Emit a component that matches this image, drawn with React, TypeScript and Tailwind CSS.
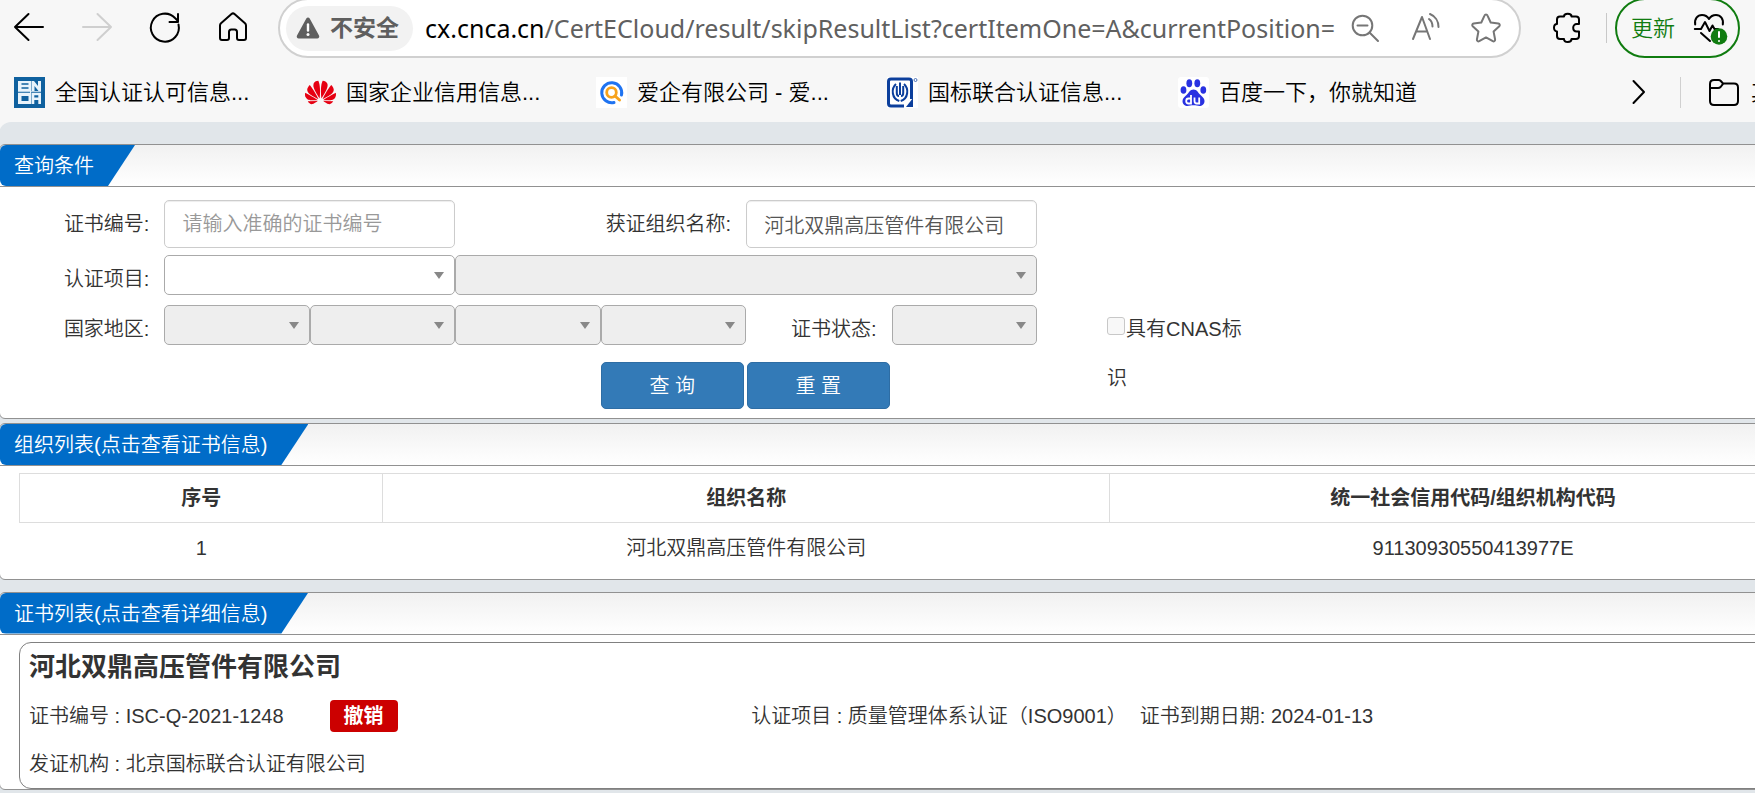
import { ReactNode } from "react";
import { SiHuawei } from "react-icons/si";

interface IPropsIcon {
  className?: string;
  children: ReactNode;
}

// 30 x 30 line icon used by the toolbar
const Icon = ({ className = "", children }: IPropsIcon) => (
  <svg
    viewBox="0 0 30 30"
    className={`block size-[30px] shrink-0 overflow-visible ${className}`}
    fill="none"
    stroke="currentColor"
    strokeWidth="2"
    strokeLinecap="round"
    strokeLinejoin="round"
    aria-hidden="true"
  >
    {children}
  </svg>
);

const Toolbar = () => (
  <div className="flex h-14 items-center pl-[14px] pr-[15px] text-black">
    <div className="flex shrink-0 gap-[38px] pr-[30px]">
      <button type="button" aria-label="后退">
        <Icon>
          <path d="M29 14H1M14.500 1L1 14l13.500 13" />
        </Icon>
      </button>
      <button type="button" aria-label="前进" disabled className="text-[#cfcfcf]">
        <Icon>
          <path d="M1 14h28M15.500 1L29 14 15.500 27" />
        </Icon>
      </button>
      <button type="button" aria-label="刷新">
        <Icon>
          <path d="M28.500 11.500A14 14 0 1 1 25 5l3 3M28 1v8h-8.500" />
        </Icon>
      </button>
      <button type="button" aria-label="主页">
        <Icon>
          <path d="M2 12.500c0-1 .3-1.700 1-2.300L13.500 1c.9-.8 2.100-.8 3 0L27 10.200c.7.600 1 1.300 1 2.300V25c0 1.200-.8 2-2 2h-5c-1.200 0-2-.8-2-2v-6c0-1.500-.8-2.500-2.300-2.500h-3.400C11.800 16.500 11 17.500 11 19v6c0 1.200-.8 2-2 2H4c-1.200 0-2-.8-2-2z" />
        </Icon>
      </button>
    </div>

    <div className="flex h-[60px] min-w-0 flex-1 items-center rounded-full border-2 border-[#d0d0d0] bg-white pl-[6px] pr-[18px] text-[#767676]">
      <button
        type="button"
        className="flex h-[45px] shrink-0 items-center gap-[10px] rounded-full bg-[#f2f2f2] pl-[10px] pr-[14px] text-[23px] font-bold text-[#5f5f5f]"
      >
        <svg viewBox="0 0 24 22" className="h-[22px] w-6" aria-hidden="true">
          <path
            d="M10.300 1.500c.8-1.400 2.600-1.400 3.400 0l9.300 17c.8 1.400-.2 3.100-1.700 3.100H2.700C1.200 21.600.2 19.900 1 18.500z"
            fill="#5f5f5f"
          />
          <path d="M12 7.500v6" stroke="#fff" strokeWidth="2.400" strokeLinecap="round" />
          <circle cx="12" cy="17.500" r="1.500" fill="#fff" />
        </svg>
        不安全
      </button>
      <div className="ml-3 min-w-0 flex-1 overflow-hidden whitespace-nowrap pt-[2px] font-['Noto_Sans','Noto_Sans_CJK_SC',sans-serif] text-[25px] text-[#606060]">
        <span className="text-black">cx.cnca.cn</span>
        /CertECloud/result/skipResultList?certItemOne=A&amp;currentPosition=
      </div>
      <div className="flex shrink-0 gap-[30px]">
        <button type="button" aria-label="缩小">
          <Icon>
            <circle cx="11.500" cy="12.500" r="9.800" />
            <path d="M6.500 12.500h10M18.500 19.500L27 28" />
          </Icon>
        </button>
        <button type="button" aria-label="大声朗读此页面">
          <Icon>
            <path d="M2 26L11 4l8 22M5.500 18.500h10.500M18 6c2 1.500 3.500 4 3.500 7.500M19 1c5 2 8.500 7 8.500 13" />
          </Icon>
        </button>
        <button type="button" aria-label="收藏">
          <Icon>
            <path d="M13.600 2.300c.5-1.200 2.300-1.200 2.800 0l3.300 7.200 7.700 1c1.300.2 1.800 1.800.9 2.700l-5.700 5.400 1.500 7.900c.2 1.300-1.100 2.300-2.300 1.700L15 24.400l-6.800 3.800c-1.200.6-2.500-.4-2.300-1.700l1.500-7.900-5.700-5.400c-.9-.9-.4-2.500.9-2.700l7.700-1z" />
          </Icon>
        </button>
      </div>
    </div>

    <button type="button" aria-label="扩展" className="ml-8 shrink-0">
      <Icon>
        <path d="M11 3.500C11 1.800 12.700.8 14.800.8s3.700 1 3.700 2.700H23c1.800 0 3 1.200 3 3V11h-2.300c-2 0-3.500 1.700-3.500 3.800s1.500 3.700 3.500 3.700H26V23c0 1.800-1.200 3-3 3h-4.500c0 1.800-1.600 3-3.700 3S11 27.800 11 26H7c-1.800 0-3-1.200-3-3v-4.500c-1.800 0-3-1.600-3-3.700S2.200 11 4 11V6.500c0-1.800 1.200-3 3-3z" />
      </Icon>
    </button>
    <span className="ml-[23px] h-[30px] w-px shrink-0 bg-[#c8c8c8]" />
    <button
      type="button"
      className="ml-2 flex h-[60px] shrink-0 items-center gap-[19px] rounded-full border-2 border-[#107c10] px-[14px] text-[22px] font-[350] text-[#107c10]"
    >
      更新
      <Icon className="text-black">
        <path d="M1.200 11.500C.2 6 3.500 2 8 2c3 0 5.500 1.500 7 4 1.500-2.500 4-4 7-4 4.500 0 7.800 4 6.800 9.500M.800 16H7l4-7 4.500 9 3-5.500 2 3.500H24M7 20l9 8" />
        <circle cx="25" cy="23.500" r="8.300" fill="#107c10" stroke="none" />
        <path d="M25 19v5M25 28v.1" stroke="#fff" />
      </Icon>
    </button>
  </div>
);

const CncaLogo = () => (
  <svg viewBox="0 0 31 31" className="size-[31px] shrink-0" aria-hidden="true">
    <path d="M0 0h31v31H0z" fill="#0f619f" />
    <path
      d="M4 4h12v10H4zM17.500 4H20l4 5V4h3v10h-2.500L20.500 9v5h-3zM4 16h12v11H4zM17.500 16H27v11h-9.500zM16 4h1v23h-1zM4 14.300h23v1H4z"
      fill="#e8f3fb"
    />
    <path
      d="M7.500 6.300h7v1.500h-7zM7.500 10.300h7v1.500h-7zM7.500 19h7v5h-7zM20.300 18.300h4v2.200h-4zM20.300 23h4v4h-4z"
      fill="#0f619f"
    />
  </svg>
);

const AiqiLogo = () => (
  <svg viewBox="0 0 31 31" className="size-[31px] shrink-0" fill="none" aria-hidden="true">
    <path d="M0 0h31v31H0z" fill="#fff" />
    <path d="M18 25.500A10 10 0 1 1 25.500 18" stroke="#1f73f1" strokeWidth="3" strokeLinecap="round" />
    <circle cx="15.500" cy="15.500" r="4.800" stroke="#f7a21b" strokeWidth="2.800" />
    <path d="M19 19l4.500 4" stroke="#f7a21b" strokeWidth="3" strokeLinecap="round" />
  </svg>
);

const GuobiaoLogo = () => (
  <svg viewBox="0 0 31 31" className="size-[31px] shrink-0" fill="none" aria-hidden="true">
    <path d="M0 0h31v31H0z" fill="#fff" />
    <path
      d="M17 29H4c-1.500 0-2.500-1-2.500-2.500v-22C1.500 3 2.500 2 4 2h18c1.500 0 2.500 1 2.500 2.500V22"
      stroke="#0c3f9c"
      strokeWidth="3"
    />
    <path
      d="M9 7C4 11.500 4.500 21.500 12.300 24M17 7c5 4.500 4.500 14.500-3.300 17M9.800 9v7c0 2 1.200 3 2.200 3M16.200 9v7c0 2-1.200 3-2.200 3M13 5.500V18"
      stroke="#0c3f9c"
      strokeWidth="2"
    />
    <path d="M19 30l7-9v9z" fill="#0c3f9c" />
    <circle cx="28.500" cy="3" r="1.500" stroke="#0c3f9c" strokeWidth=".7" />
  </svg>
);

const BaiduLogo = () => (
  <svg viewBox="0 0 31 31" className="size-[31px] shrink-0" aria-hidden="true">
    <rect width="31" height="31" rx="3" fill="#fff" />
    <g fill="#2932e1">
      <ellipse cx="5.500" cy="13" rx="2.900" ry="3.800" />
      <ellipse cx="11.300" cy="6.200" rx="2.900" ry="4" />
      <ellipse cx="19.300" cy="6.200" rx="2.900" ry="4" />
      <ellipse cx="25.300" cy="13" rx="2.900" ry="3.800" />
      <path d="M15.500 12.500c3.500 0 4.500 3 6.500 5s4.500 3.500 4.500 6.500c0 3.500-2.500 5-5 5-2 0-3.500-.7-6-.7s-4 .7-6 .7c-2.500 0-5-1.500-5-5 0-3 2.500-4.500 4.500-6.500s3-5 6.500-5z" />
    </g>
    <path
      d="M13 18v8.500h-2.500c-1.500 0-2.300-1-2.300-2.500s.8-2.500 2.300-2.500H13M16.500 20.500V24c0 1.700.8 2.500 2.200 2.500h2.500v-6"
      stroke="#fff"
      strokeWidth="1.800"
      fill="none"
    />
  </svg>
);

const bookmarks = [
  { label: "全国认证认可信息...", logo: <CncaLogo /> },
  { label: "国家企业信用信息...", logo: <SiHuawei className="size-[31px] shrink-0 text-[#e60012]" /> },
  { label: "爱企有限公司 - 爱...", logo: <AiqiLogo /> },
  { label: "国标联合认证信息...", logo: <GuobiaoLogo /> },
  { label: "百度一下，你就知道", logo: <BaiduLogo /> },
];

const Bookmarks = () => (
  <nav className="flex h-[66px] items-center overflow-hidden whitespace-nowrap pl-[14px] pt-[6px] text-[22px] font-[350] text-black">
    {bookmarks.map(({ label, logo }) => (
      <a key={label} href="#" className="flex w-[291px] shrink-0 items-center gap-[10px]">
        {logo}
        {label}
      </a>
    ))}
    <div className="ml-auto flex w-[130px] shrink-0 items-center">
      <button type="button" aria-label="更多书签" className="w-[26px]">
        <svg viewBox="0 0 26 26" className="size-[26px]" fill="none" aria-hidden="true">
          <path
            d="M8.500 2L19 13 8.500 24"
            stroke="currentColor"
            strokeWidth="2"
            strokeLinecap="round"
            strokeLinejoin="round"
          />
        </svg>
      </button>
      <span className="ml-[29px] h-[31px] w-px shrink-0 bg-[#d0d0d0]" />
      <a href="#" className="ml-7 flex items-center gap-3">
        <Icon>
          <path d="M1 7c0-2.500 1.300-4 4-4h4.500c1 0 1.700.4 2.300 1L14 6.500h11c2.500 0 4 1.500 4 4V24c0 2.500-1.500 4-4 4H5c-2.500 0-4-1.500-4-4zM1 11h8c1.200 0 1.900-.3 2.600-1L14 6.800" />
        </Icon>
        其他收藏夹
      </a>
    </div>
  </nav>
);

interface IPropsPanel {
  title: string;
  className?: string;
  children: ReactNode;
}

const Panel = ({ title, className = "", children }: IPropsPanel) => (
  <section className={`rounded-md border border-[#919191] bg-white ${className}`}>
    <header className="flex h-[42px] rounded-t-md border-b border-[#919191] bg-linear-to-b from-[#f1f1f1] to-white">
      <h2 className="rounded-l-md bg-[#006cc8] pl-[14px] pr-[41px] leading-[43px] text-white [clip-path:polygon(0_0,100%_0,calc(100%-27px)_100%,0_100%)]">
        {title}
      </h2>
    </header>
    {children}
  </section>
);

interface IPropsSelect {
  label: string;
  width: string;
  disabled?: boolean;
}

const Select = ({ label, width, disabled = true }: IPropsSelect) => (
  <div className={`relative shrink-0 ${width}`}>
    <select
      aria-label={label}
      disabled={disabled}
      className="block h-10 w-full appearance-none rounded-[5px] border border-[#aaa] bg-white opacity-100 disabled:bg-[#eee]"
    />
    <svg
      viewBox="0 0 10 7"
      className="pointer-events-none absolute right-[11px] top-[17px] h-[7px] w-[10px]"
      aria-hidden="true"
    >
      <path d="M0 0h10L5 7z" fill="#888" />
    </svg>
  </div>
);

const inputClass =
  "h-12 w-[16%] shrink-0 rounded-[5px] border border-[#ccc] bg-white px-[17px] text-[#555] shadow-[inset_0_1px_1px_rgba(0,0,0,0.075)] placeholder:text-[#999]";
const labelClass = "shrink-0 pr-[15px] text-right";
const buttonClass = "h-[47px] w-[143px] rounded-[5px] border border-[#2e6da4] bg-[#337ab7]";

const SearchForm = () => (
  <form className="flex flex-col px-[19px] pb-[9px] pt-[13px]" onSubmit={e => e.preventDefault()}>
    <div className="flex items-center">
      <label htmlFor="certNo" className={`w-[8%] ${labelClass}`}>
        证书编号:
      </label>
      <input id="certNo" placeholder="请输入准确的证书编号" className={inputClass} />
      <label htmlFor="orgName" className={`w-[16%] ${labelClass}`}>
        获证组织名称:
      </label>
      <input id="orgName" defaultValue="河北双鼎高压管件有限公司" className={inputClass} />
    </div>
    <div className="mt-[7px] flex">
      <span className={`w-[8%] leading-[48px] ${labelClass}`}>认证项目:</span>
      <Select label="认证项目" width="w-[16%]" disabled={false} />
      <Select label="认证项目子类" width="w-[32%]" />
    </div>
    <div className="mt-[2px] flex h-[57px]">
      <span className={`w-[8%] leading-[48px] ${labelClass}`}>国家地区:</span>
      <Select label="国家" width="w-[8%]" />
      <Select label="省" width="w-[8%]" />
      <Select label="市" width="w-[8%]" />
      <Select label="区县" width="w-[8%]" />
      <span className={`w-[8%] leading-[48px] ${labelClass}`}>证书状态:</span>
      <Select label="证书状态" width="w-[8%]" />
      <label className="ml-[70px] w-[8%] shrink-0 leading-[49px]">
        <input
          type="checkbox"
          disabled
          className="mr-px inline-block size-[18px] appearance-none rounded-[3px] border border-[#c8c8c8] bg-[#f8f8f8] align-[1px]"
        />
        具有CNAS标识
      </label>
    </div>
    <div className="ml-[32%] flex gap-[3px] text-white">
      <button type="submit" className={buttonClass}>
        查 询
      </button>
      <button type="reset" className={buttonClass}>
        重 置
      </button>
    </div>
  </form>
);

const OrgTable = () => (
  <div className="px-[19px] pb-[6px] pt-[7px]">
    <table className="w-full table-fixed border-collapse text-center">
      <thead>
        <tr className="h-[49px] font-bold">
          <th className="w-[20%] border border-[#ddd]">序号</th>
          <th className="w-[40%] border border-[#ddd]">组织名称</th>
          <th className="w-[40%] border border-[#ddd]">统一社会信用代码/组织机构代码</th>
        </tr>
      </thead>
      <tbody>
        <tr className="h-[50px]">
          <td>1</td>
          <td>河北双鼎高压管件有限公司</td>
          <td>91130930550413977E</td>
        </tr>
      </tbody>
    </table>
  </div>
);

const CertCard = () => (
  <article className="mx-[19px] mt-[7px] rounded-xl border border-[#808080] px-[9px]">
    <h3 className="text-[26px] font-bold leading-[49px]">河北双鼎高压管件有限公司</h3>
    <div className="flex h-12 items-center">
      <div className="flex w-[40%] shrink-0 items-center gap-[46px]">
        <span>证书编号 : ISC-Q-2021-1248</span>
        <span className="rounded bg-[#c00] px-[14px] font-bold leading-8 text-white">撤销</span>
      </div>
      <div className="flex shrink-0 gap-[13px] pl-[3px]">
        <span>认证项目 : 质量管理体系认证（ISO9001）</span>
        <span>证书到期日期: 2024-01-13</span>
      </div>
    </div>
    <p className="leading-[48px]">发证机构 : 北京国标联合认证有限公司</p>
  </article>
);

export default function App() {
  return (
    <div className="min-h-screen overflow-hidden bg-[#f7f7f7] font-['Liberation_Sans','Noto_Sans_CJK_SC',sans-serif]">
      <Toolbar />
      <Bookmarks />
      {/* the page is wider than the window, the rest is cut off on the right */}
      <main className="-ml-px w-[calc(100%+103px)] rounded-tl-xl bg-[#e1e6ea] pb-4 pt-[22px] text-[20px] font-[350] text-[#333]">
        <Panel title="查询条件">
          <SearchForm />
        </Panel>
        <Panel title="组织列表(点击查看证书信息)" className="mt-1">
          <OrgTable />
        </Panel>
        <Panel title="证书列表(点击查看详细信息)" className="mt-3">
          <CertCard />
        </Panel>
      </main>
    </div>
  );
}
